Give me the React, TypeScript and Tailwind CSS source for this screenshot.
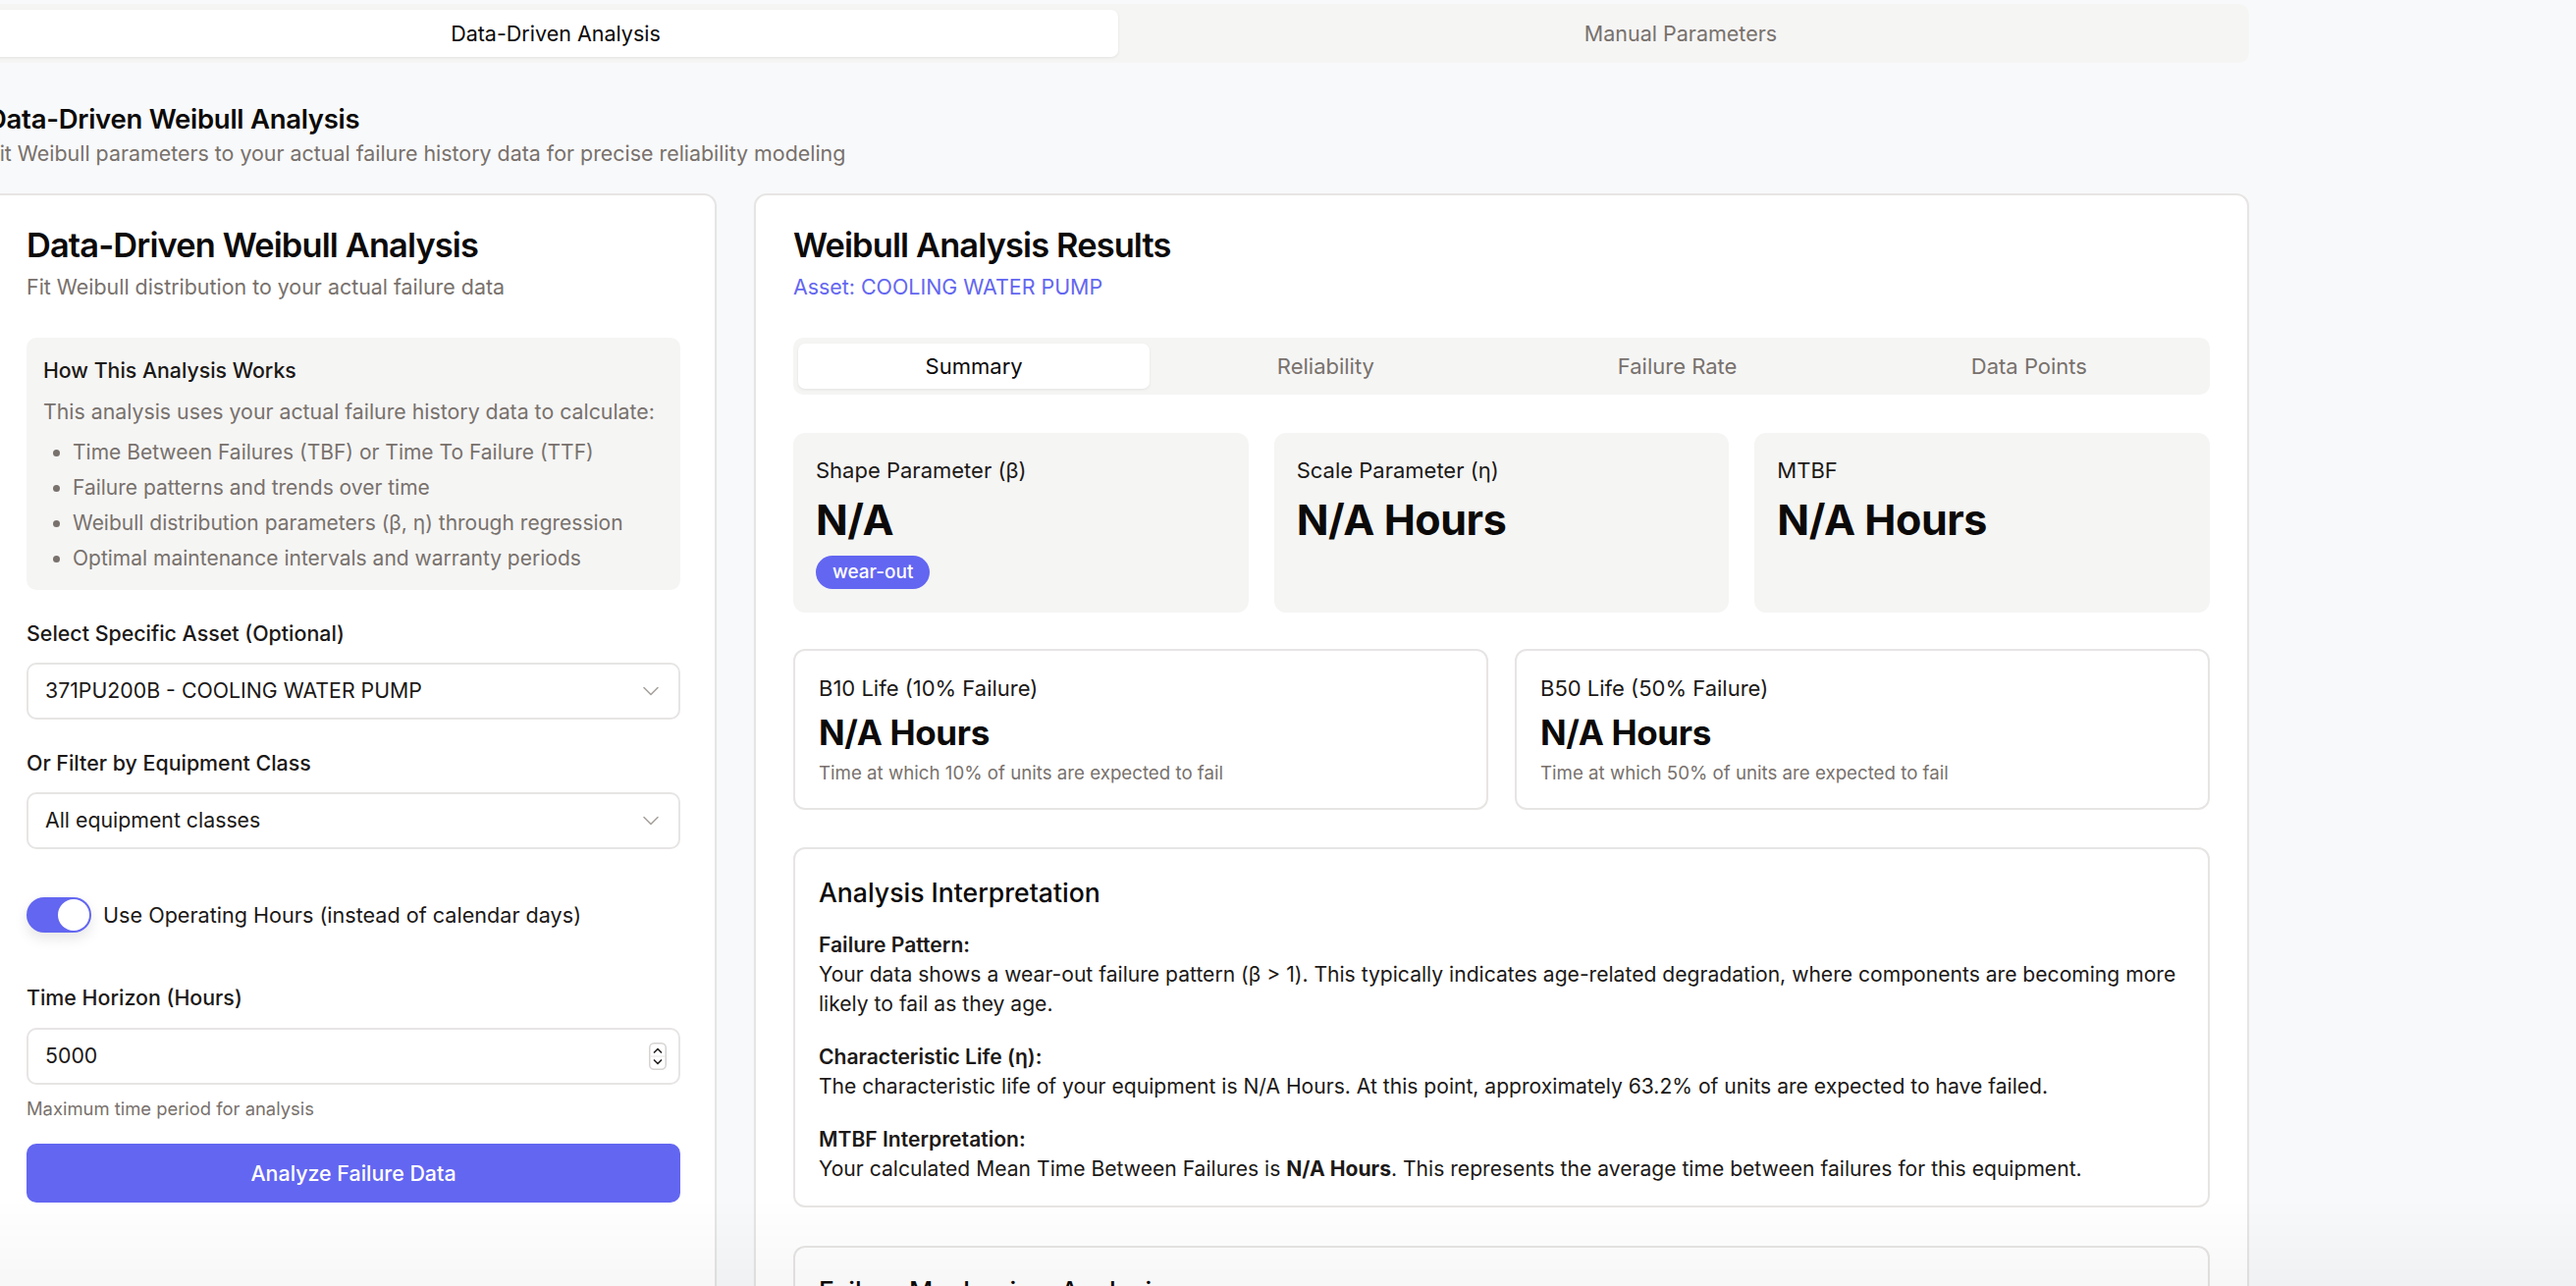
import { ChevronDown } from "lucide-react";

const bullets = [
  "Time Between Failures (TBF) or Time To Failure (TTF)",
  "Failure patterns and trends over time",
  "Weibull distribution parameters (β, η) through regression",
  "Optimal maintenance intervals and warranty periods",
];

const resultTabs = ["Summary", "Reliability", "Failure Rate", "Data Points"];

function SelectBox({ value }: { value: string }) {
  return (
    <div className="mt-[13px] flex h-[58px] items-center justify-between rounded-[10px] border-2 border-[#e7e5e4] bg-white pl-[17px] pr-[14px] text-[21.3px] text-[#1c1917]">
      <span className="whitespace-nowrap">{value}</span>
      <ChevronDown className="h-[28px] w-[28px] text-[#a8a29e]" strokeWidth={1.4} />
    </div>
  );
}

function StatCard({ label, value, badge }: { label: string; value: string; badge?: string }) {
  return (
    <div className="rounded-[12px] bg-[#f5f5f4] px-[23px] pb-[24px] pt-[23px]">
      <p className="text-[22px] leading-[30px] text-[#1c1917]">{label}</p>
      <p className="mt-[10px] text-[43px] font-bold leading-[50px] tracking-[-0.01em] text-[#0c0a09]">{value}</p>
      {badge && (
        <span className="mt-[12px] inline-flex h-[34px] items-center rounded-full bg-[#6366f1] px-[17px] text-[19px] font-medium text-white">
          {badge}
        </span>
      )}
    </div>
  );
}

function LifeCard({ label, note }: { label: string; note: string }) {
  return (
    <div className="rounded-[12px] border-2 border-[#e7e5e4] bg-white px-[24px] pb-[22px] pt-[23px]">
      <p className="text-[22px] leading-[30px] text-[#1c1917]">{label}</p>
      <p className="mt-[10px] text-[35px] font-bold leading-[40px] tracking-[-0.01em] text-[#0c0a09]">N/A Hours</p>
      <p className="mt-[8px] text-[18.7px] leading-[27px] text-[#78716c]">{note}</p>
    </div>
  );
}

export default function App() {
  return (
    <div className="relative min-h-screen overflow-hidden bg-[#f8f9fa] font-['Inter',sans-serif] text-[#0c0a09]">
      <div className="ml-[-13px] w-[2304px] pt-[4px]">
        {/* Mode tabs */}
        <div className="flex h-[60px] rounded-[10px] bg-[#f5f5f4] p-[6px]">
          <div className="flex flex-1 items-center justify-center rounded-[7px] bg-white text-[21.5px] text-[#0c0a09] shadow-[0_1px_3px_rgba(0,0,0,0.08)]">
            Data-Driven Analysis
          </div>
          <div className="flex flex-1 items-center justify-center text-[21.5px] text-[#78716c]">Manual Parameters</div>
        </div>

        <h2 className="mt-[37px] text-[27.5px] font-semibold leading-[40px] tracking-[-0.01em]">Data-Driven Weibull Analysis</h2>
        <p className="whitespace-nowrap text-[21.4px] leading-[30px] text-[#78716c]">
          Fit Weibull parameters to your actual failure history data for precise reliability modeling
        </p>

        <div className="mt-[26px] grid grid-cols-[743px_minmax(0,1fr)] gap-[38px]">
          {/* Left: setup */}
          <div className="rounded-[13px] border-2 border-[#e7e5e4] bg-white pl-[38px] pr-[35px] pt-[31px] shadow-[0_1px_2px_rgba(0,0,0,0.04)]">
            <h3 className="whitespace-nowrap text-[34.4px] font-semibold leading-[40px] tracking-[-0.025em]">Data-Driven Weibull Analysis</h3>
            <p className="mt-[5px] text-[21.4px] leading-[34px] text-[#78716c]">Fit Weibull distribution to your actual failure data</p>

            <div className="mt-[35px] rounded-[10px] bg-[#f5f5f4] px-[17px] pb-[14px] pt-[16px]">
              <p className="text-[21.3px] font-medium leading-[34px] text-[#1c1917]">How This Analysis Works</p>
              <p className="mt-[8px] whitespace-nowrap text-[21.3px] leading-[34px] text-[#78716c]">
                This analysis uses your actual failure history data to calculate:
              </p>
              <ul className="mt-[7px] list-disc pl-[30px] text-[21px] leading-[36px] text-[#78716c]">
                {bullets.map((b) => (
                  <li key={b} className="whitespace-nowrap">
                    {b}
                  </li>
                ))}
              </ul>
            </div>

            <p className="mt-[27px] text-[21.4px] font-medium leading-[34px] text-[#1c1917]">Select Specific Asset (Optional)</p>
            <SelectBox value="371PU200B - COOLING WATER PUMP" />

            <p className="mt-[27px] text-[21.4px] font-medium leading-[34px] text-[#1c1917]">Or Filter by Equipment Class</p>
            <SelectBox value="All equipment classes" />

            <div className="mt-[49px] flex items-center gap-[12px]">
              <div className="flex h-[36px] w-[66px] items-center justify-end rounded-full bg-[#6366f1] p-[2px] shadow-[0_6px_14px_rgba(0,0,0,0.10)]">
                <div className="h-[32px] w-[32px] rounded-full bg-white" />
              </div>
              <span className="whitespace-nowrap text-[21.6px] leading-[34px] text-[#1c1917]">
                Use Operating Hours (instead of calendar days)
              </span>
            </div>

            <p className="mt-[49px] text-[21.4px] font-medium leading-[34px] text-[#1c1917]">Time Horizon (Hours)</p>
            <div className="mt-[14px] flex h-[58px] items-center justify-between rounded-[10px] border-2 border-[#e7e5e4] bg-white pl-[17px] pr-[12px] text-[21.3px] text-[#1c1917]">
              <span>5000</span>
              <svg width="18" height="28" viewBox="0 0 18 28" fill="none">
                <rect x="0.75" y="0.75" width="16.5" height="26.5" rx="4.5" fill="white" stroke="#d6d3d1" strokeWidth="1.5" />
                <line x1="1.5" y1="14" x2="16.5" y2="14" stroke="#e7e5e4" strokeWidth="1" />
                <path d="M5.5 10 L9 6.5 L12.5 10" stroke="#292524" strokeWidth="1.7" strokeLinecap="round" strokeLinejoin="round" />
                <path d="M5.5 18 L9 21.5 L12.5 18" stroke="#292524" strokeWidth="1.7" strokeLinecap="round" strokeLinejoin="round" />
              </svg>
            </div>
            <p className="mt-[11px] text-[18.4px] leading-[27px] text-[#78716c]">Maximum time period for analysis</p>

            <button className="mt-[22px] flex h-[60px] w-full items-center justify-center rounded-[10px] bg-[#6366f1] text-[21.4px] font-medium text-white">
              Analyze Failure Data
            </button>
          </div>

          {/* Right: results */}
          <div className="min-w-0 rounded-[13px] border-2 border-[#e7e5e4] bg-white px-[38px] pb-[40px] pt-[31px] shadow-[0_1px_2px_rgba(0,0,0,0.04)]">
            <h3 className="text-[34.4px] font-semibold leading-[40px] tracking-[-0.025em]">Weibull Analysis Results</h3>
            <p className="mt-[5px] text-[21.4px] leading-[34px] text-[#6366f1]">Asset: COOLING WATER PUMP</p>

            <div className="mt-[35px] grid h-[58px] grid-cols-4 rounded-[10px] bg-[#f5f5f4] px-[5px] py-[6px]">
              {resultTabs.map((t, i) => (
                <div
                  key={t}
                  className={`flex items-center justify-center rounded-[7px] text-[22px] ${
                    i === 0 ? "bg-white text-[#0c0a09] shadow-[0_1px_3px_rgba(0,0,0,0.08)]" : "text-[#78716c]"
                  }`}
                >
                  {t}
                </div>
              ))}
            </div>

            <div className="mt-[39px] grid grid-cols-3 gap-[26px]">
              <StatCard label="Shape Parameter (β)" value="N/A" badge="wear-out" />
              <StatCard label="Scale Parameter (η)" value="N/A Hours" />
              <StatCard label="MTBF" value="N/A Hours" />
            </div>

            <div className="mt-[37px] grid grid-cols-2 gap-[27px]">
              <LifeCard label="B10 Life (10% Failure)" note="Time at which 10% of units are expected to fail" />
              <LifeCard label="B50 Life (50% Failure)" note="Time at which 50% of units are expected to fail" />
            </div>

            <div className="mt-[38px] rounded-[12px] border-2 border-[#e7e5e4] bg-white px-[24px] pb-[22px] pt-[24px]">
              <h4 className="text-[26.6px] font-medium leading-[40px] text-[#0c0a09]">Analysis Interpretation</h4>
              <div className="mt-[19px] flex flex-col gap-[24px] text-[21.1px] leading-[30px] text-[#1c1917]">
                <div>
                  <p className="font-semibold">Failure Pattern:</p>
                  <p>
                    <span className="whitespace-nowrap">
                      Your data shows a wear-out failure pattern (β &gt; 1). This typically indicates age-related degradation, where components are becoming more
                    </span>
                    <br />
                    likely to fail as they age.
                  </p>
                </div>
                <div>
                  <p className="font-semibold">Characteristic Life (η):</p>
                  <p>
                    The characteristic life of your equipment is N/A Hours. At this point, approximately 63.2% of units are expected to have failed.
                  </p>
                </div>
                <div>
                  <p className="font-semibold">MTBF Interpretation:</p>
                  <p>
                    Your calculated Mean Time Between Failures is <span className="font-bold">N/A Hours</span>. This represents the average time between
                    failures for this equipment.
                  </p>
                </div>
              </div>
            </div>

            <div className="mt-[39px] rounded-[12px] border-2 border-[#e7e5e4] bg-white px-[24px] pb-[24px] pt-[24px]">
              <h4 className="text-[26.6px] font-medium leading-[40px] text-[#0c0a09]">Failure Mechanism Analysis</h4>
              <div className="h-[200px]" />
            </div>
          </div>
        </div>
      </div>

      {/* soft fade at the bottom of the viewport */}
      <div className="pointer-events-none fixed inset-x-0 bottom-0 h-[90px] bg-gradient-to-t from-[rgba(0,0,0,0.03)] to-transparent" />
    </div>
  );
}
